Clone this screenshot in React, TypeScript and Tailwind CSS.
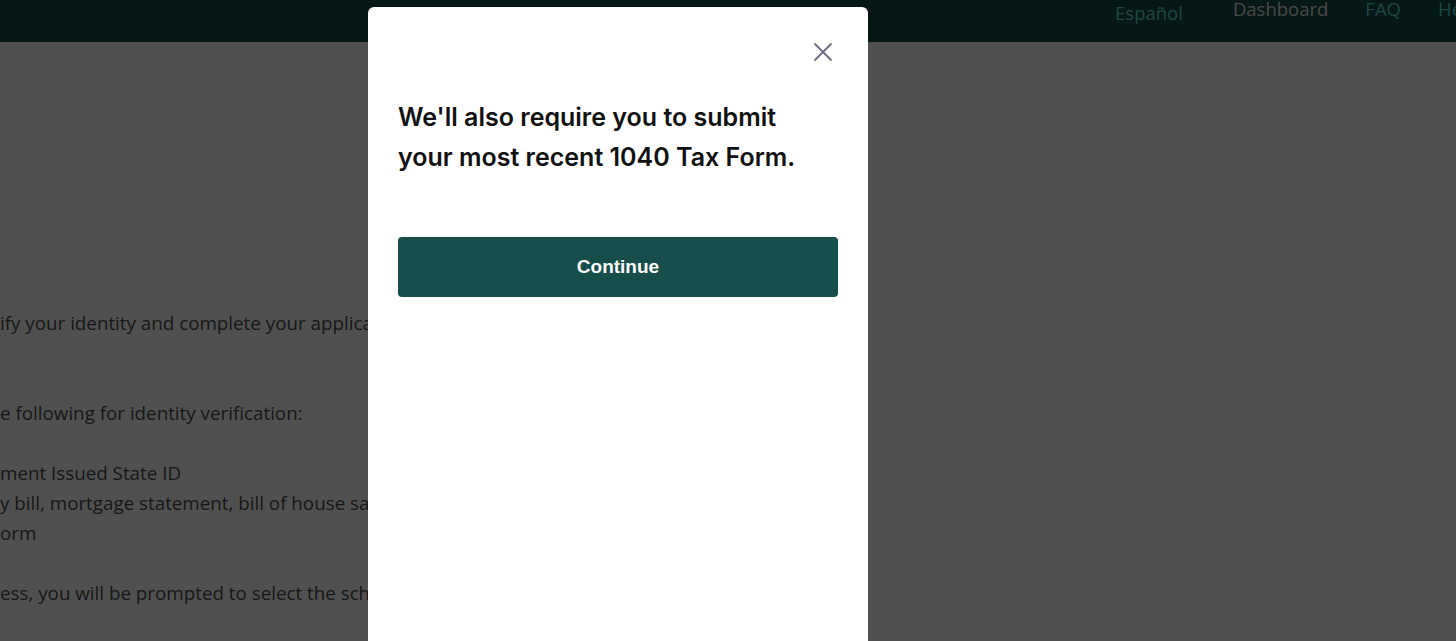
import React from "react";

export default function App() {
  const bodyFont = { fontFamily: '"Open Sans", "Noto Sans", sans-serif' } as React.CSSProperties;
  return (
    <div className="relative h-[641px] w-[1456px] overflow-hidden bg-[#505050]" style={bodyFont}>
      <header className="flex h-[42px] items-start bg-[#061815] text-[18.5px]">
        <div className="flex-1" />
        <span className="mt-[1px] leading-[24px] text-[#1f4744]">Español</span>
        <span className="ml-[50px] mt-[-3px] leading-[24px] text-[#4a4a4a]">Dashboard</span>
        <span className="ml-[37px] mt-[-3px] leading-[24px] text-[#1f4744]">FAQ</span>
        <span className="ml-[37px] mt-[-3px] w-[18px] overflow-hidden whitespace-nowrap leading-[24px] text-[#1f4744]">
          He
        </span>
      </header>

      <div className="pt-[266px] text-[18.8px] leading-[30px] text-[#161616]">
        <p>ify your identity and complete your application, please</p>
        <p className="mt-[60px]">e following for identity verification:</p>
        <div className="mt-[30px]">
          <p>ment Issued State ID</p>
          <p>y bill, mortgage statement, bill of house sale</p>
          <p>orm</p>
        </div>
        <p className="mt-[30px]">ess, you will be prompted to select the school</p>
      </div>

      <div
        className="absolute left-[368px] top-[7px] h-[700px] w-[500px] rounded-t-[6px] bg-white px-[30px]"
        style={{ fontFamily: 'Inter, "Liberation Sans", sans-serif' }}
      >
        <div className="flex justify-end pt-[34px] pr-[4px]">
          <svg width="22" height="22" viewBox="0 0 22 22" fill="none" stroke="#6b6b80" strokeWidth="1.8" strokeLinecap="round">
            <path d="M3 3 L19 19 M19 3 L3 19" />
          </svg>
        </div>
        <h2 className="mt-[34px] text-[25px] font-semibold leading-[40px] text-[#111111]">
          We'll also require you to submit
          <br />
          your most recent 1040 Tax Form.
        </h2>
        <button
          className="mt-[60px] flex h-[60px] w-[440px] items-center justify-center rounded-[4px] bg-[#174d4b] text-[19px] font-bold text-white"
          style={{ fontFamily: '"Liberation Sans", Arial, sans-serif' }}
        >
          Continue
        </button>
      </div>
    </div>
  );
}
